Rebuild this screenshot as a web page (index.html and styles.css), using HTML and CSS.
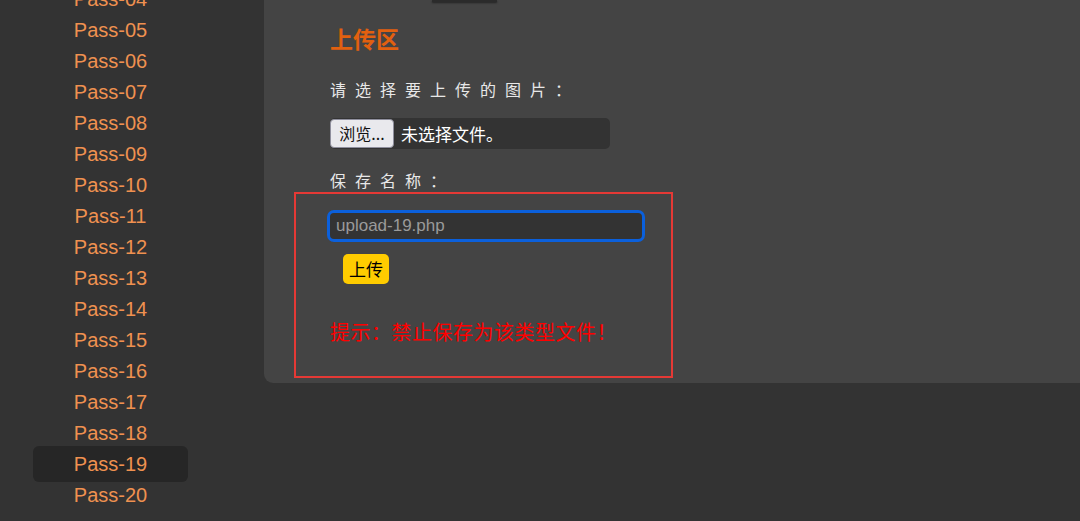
FILE: index.html
```html
<!DOCTYPE html>
<html lang="zh-CN">
<head>
    <meta charset="UTF-8">
    <meta name="viewport" content="width=device-width, initial-scale=1.0">
    <title>upload-labs Pass-19</title>
    <link rel="stylesheet" href="styles.css">
</head>
<body>
    <div class="page">
        <ul class="menu">
            <li><a href="#">Pass-04</a></li>
            <li><a href="#">Pass-05</a></li>
            <li><a href="#">Pass-06</a></li>
            <li><a href="#">Pass-07</a></li>
            <li><a href="#">Pass-08</a></li>
            <li><a href="#">Pass-09</a></li>
            <li><a href="#">Pass-10</a></li>
            <li><a href="#">Pass-11</a></li>
            <li><a href="#">Pass-12</a></li>
            <li><a href="#">Pass-13</a></li>
            <li><a href="#">Pass-14</a></li>
            <li><a href="#">Pass-15</a></li>
            <li><a href="#">Pass-16</a></li>
            <li><a href="#">Pass-17</a></li>
            <li><a href="#">Pass-18</a></li>
            <li class="active"><a href="#">Pass-19</a></li>
            <li><a href="#">Pass-20</a></li>
        </ul>

        <div class="panel">
            <div class="tab-edge"></div>
            <div class="content">
                <h2>上传区</h2>
                <p class="label">请选择要上传的图片：</p>
                <div class="file-row">
                    <span class="browse">浏览...</span>
                    <span class="file-name">未选择文件。</span>
                </div>
                <p class="label">保存名称：</p>
            </div>

            <!-- marked area -->
            <div class="mark">
                <input type="text" class="name-input" placeholder="upload-19.php">
                <div><button class="upload">上传</button></div>
                <p class="msg">提示：禁止保存为该类型文件！</p>
            </div>
        </div>
    </div>
</body>
</html>
```

FILE: styles.css
```css
html, body {
    margin: 0;
    height: 100%;
    background-color: #333;
    overflow: hidden;
}
body {
    font-family: "Liberation Sans", Arial, "Noto Sans CJK SC", sans-serif;
}
.page {
    display: grid;
    grid-template-columns: 221px 1fr;
    column-gap: 43px;
    align-items: start;
}
.menu {
    list-style: none;
    margin: -16px 0 0;
    padding: 0;
}
.menu li {
    display: flow-root;
    height: 31px;
    line-height: 31px;
    text-align: center;
}
.menu a {
    display: block;
    color: #ef9150;
    font-size: 20px;
    text-decoration: none;
}
.menu .active a {
    width: 155px;
    margin: -3px auto 0;
    line-height: 36px;
    background-color: #262626;
    border-radius: 6px;
}
.panel {
    background-color: #444;
    border-bottom-left-radius: 9px;
    padding: 0 0 5px 30px;
    font-family: "Noto Sans CJK SC", "Liberation Sans", sans-serif;
}
.tab-edge {
    width: 65px;
    height: 2px;
    margin-left: 138px;
    background-color: #2b2b2b;
    box-shadow: 0 1px 2px rgba(0,0,0,0.5);
}
.content {
    padding-left: 36px;
}
h2 {
    margin: 21px 0 0;
    font-size: 23px;
    line-height: 30px;
    color: #e2600f;
}
.label {
    margin: 24px 0 0;
    font-size: 16px;
    line-height: 24px;
    letter-spacing: 9px;
    color: #e8e8e8;
}
.file-row {
    display: flex;
    align-items: center;
    width: 280px;
    height: 31px;
    margin-top: 17px;
    background-color: #333;
    border-radius: 5px;
}
.file-row + .label {
    margin-top: 19px;
}
.browse {
    box-sizing: border-box;
    width: 64px;
    height: 29px;
    line-height: 27px;
    text-align: center;
    background-color: #e9e9ed;
    border: 1px solid #8f8f9d;
    border-radius: 4px;
    color: #111;
    font-size: 16px;
}
.file-name {
    margin-left: 7px;
    color: #fff;
    font-size: 17px;
}
.mark {
    box-sizing: border-box;
    width: 379px;
    border: 2px solid #e53935;
    padding: 16px 0 30px 31px;
}
.name-input {
    box-sizing: border-box;
    display: block;
    width: 318px;
    height: 32px;
    padding: 0 6px;
    background-color: #333;
    border: 3px solid #0b60dc;
    border-radius: 7px;
    color: #ddd;
    font-family: "Liberation Sans", Arial, sans-serif;
    font-size: 17px;
    outline: none;
}
.name-input::placeholder {
    color: #9a9a9a;
}
.upload {
    height: 30px;
    margin: 12px 0 0 16px;
    padding: 0 6px;
    background-color: #ffcc00;
    border: none;
    border-radius: 5px;
    color: #000;
    font-family: "Noto Sans CJK SC", sans-serif;
    font-size: 17px;
    line-height: 30px;
}
.msg {
    margin: 34px 0 0 3px;
    font-size: 20px;
    line-height: 28px;
    letter-spacing: 0.5px;
    color: #f00;
}
```
